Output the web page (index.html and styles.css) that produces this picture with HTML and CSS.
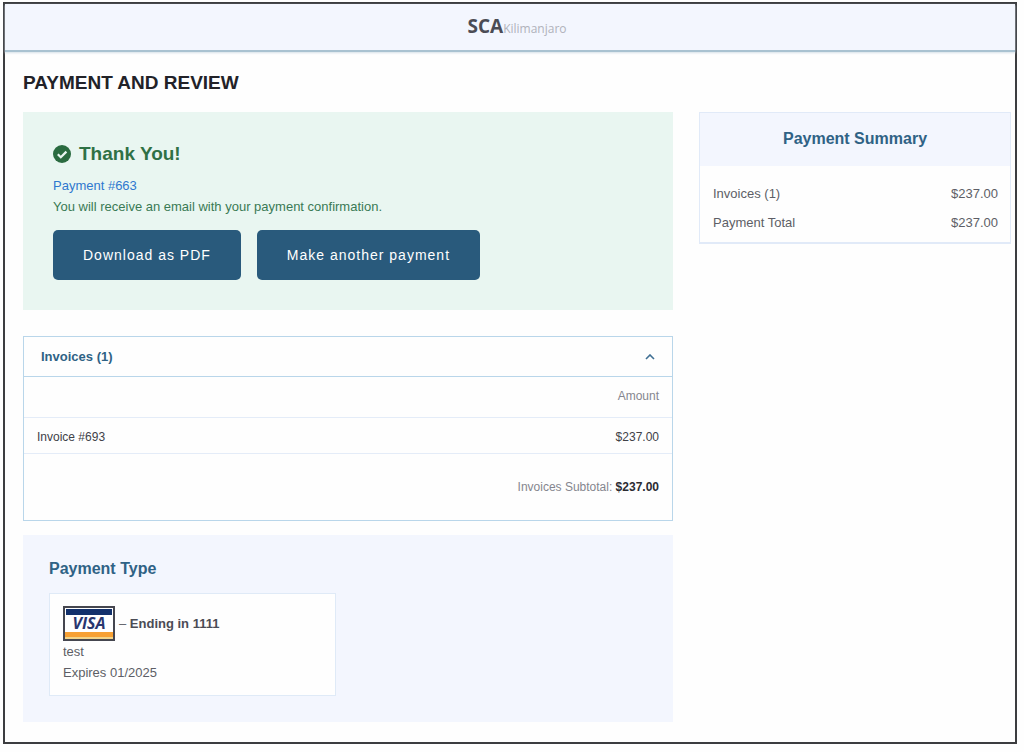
FILE: index.html
```html
<!DOCTYPE html>
<html lang="en">
<head>
  <meta charset="UTF-8" />
  <meta name="viewport" content="width=device-width, initial-scale=1" />
  <title>Payment and Review</title>
  <link rel="stylesheet" href="styles.css">
</head>
<body>
  <div class="page">
    <header class="site-header">
      <a class="logo" href="#"><span class="logo-main">SCA</span><span class="logo-sub">Kilimanjaro</span></a>
    </header>

    <main class="content">
      <h1 class="page-title">PAYMENT AND REVIEW</h1>

      <div class="columns">
        <div class="main-column">
          <section class="confirmation">
            <h2 class="confirmation-title">
              <svg class="check-icon" viewBox="0 0 18 18" aria-hidden="true">
                <circle cx="9" cy="9" r="9" fill="#2a6b40" />
                <path d="M4.8 9.2l3 3 5.6-5.6" fill="none" stroke="#e9f6f1" stroke-width="2.2" />
              </svg>
              Thank You!
            </h2>
            <a class="payment-link" href="#">Payment #663</a>
            <p class="confirmation-text">You will receive an email with your payment confirmation.</p>
            <div class="actions">
              <button class="button" type="button">Download as PDF</button>
              <button class="button" type="button">Make another payment</button>
            </div>
          </section>

          <section class="accordion">
            <h2 class="accordion-head">
              <button class="accordion-toggle" id="toggle" type="button" aria-expanded="true" aria-controls="invoices">
                Invoices (1)
                <svg class="chevron" viewBox="0 0 10 6" aria-hidden="true">
                  <path d="M1 5l4-4 4 4" fill="none" stroke="#3f6f93" stroke-width="1.6" />
                </svg>
              </button>
            </h2>
            <table class="invoices" id="invoices">
              <thead>
                <tr><td></td><th scope="col">Amount</th></tr>
              </thead>
              <tbody>
                <tr><td>Invoice #693</td><td class="amount">$237.00</td></tr>
              </tbody>
              <tfoot>
                <tr><td colspan="2">Invoices Subtotal: <strong>$237.00</strong></td></tr>
              </tfoot>
            </table>
          </section>

          <section class="payment-type">
            <h2 class="section-title">Payment Type</h2>
            <div class="card">
              <div class="card-number">
                <svg class="visa" viewBox="0 0 52 35" role="img" aria-label="Visa">
                  <rect x="1" y="1" width="50" height="33" fill="#fff" stroke="#45464f" stroke-width="2" />
                  <rect x="3" y="3" width="46" height="6" fill="#12306b" />
                  <rect x="2" y="26" width="48" height="5" fill="#f7a033" />
                  <rect x="2" y="31" width="48" height="2" fill="#f3d488" />
                  <text x="26" y="23" class="visa-text">VISA</text>
                </svg>
                <span>– <strong>Ending in 1111</strong></span>
              </div>
              <p>test</p>
              <p>Expires 01/2025</p>
            </div>
          </section>
        </div>

        <aside class="summary">
          <h2 class="summary-title">Payment Summary</h2>
          <dl class="summary-list">
            <div class="summary-row"><dt>Invoices (1)</dt><dd>$237.00</dd></div>
            <div class="summary-row"><dt>Payment Total</dt><dd>$237.00</dd></div>
          </dl>
        </aside>
      </div>
    </main>
  </div>

  <script>
    const toggle = document.getElementById('toggle');
    const invoices = document.getElementById('invoices');

    toggle.addEventListener('click', () => {
      const open = toggle.getAttribute('aria-expanded') === 'true';
      toggle.setAttribute('aria-expanded', String(!open));
      invoices.hidden = open;
    });
  </script>
</body>
</html>
```
FILE: styles.css
```css
* {
  box-sizing: border-box;
}

body {
  margin: 0;
  padding: 2px 7px 7px 3px;
  font-family: "Liberation Sans", Arial, sans-serif;
  font-size: 13px;
  line-height: 21px;
  color: #5d5e66;
  background: #fefefe;
}

h1,
h2,
p,
dl,
dd {
  margin: 0;
}

.page {
  border: 2px solid #3c3d40;
}

/* Header */
.site-header {
  display: flex;
  justify-content: center;
  align-items: center;
  height: 48px;
  padding-left: 14px;
  background: #f3f6fe;
  border-bottom: 2px solid #a9c2d1;
  box-shadow: 0 1px 2px #d5e0e8;
}

.logo {
  font-family: "Open Sans", sans-serif;
  text-decoration: none;
}

.logo-main {
  font-size: 19px;
  font-weight: bold;
  color: #4b4c55;
}

.logo-sub {
  font-size: 12px;
  color: #b0b2bb;
}

.content {
  padding: 19px 4px 20px 18px;
}

.page-title {
  margin-bottom: 17px;
  font-size: 19px;
  line-height: 24px;
  color: #222228;
}

.columns {
  display: grid;
  grid-template-columns: 25fr 12fr;
  gap: 26px;
  align-items: start;
}

/* Confirmation */
.confirmation {
  margin-bottom: 26px;
  padding: 30px;
  background: #e9f6f1;
}

.confirmation-title {
  display: flex;
  align-items: center;
  gap: 8px;
  margin-bottom: 9px;
  font-size: 19px;
  line-height: 24px;
  color: #2f7145;
}

.check-icon {
  width: 18px;
  height: 18px;
}

.payment-link {
  color: #2f78cf;
  text-decoration: none;
}

.confirmation-text {
  color: #3a7a55;
}

.actions {
  display: flex;
  gap: 16px;
  margin-top: 13px;
}

.button {
  height: 50px;
  padding: 0 30px;
  border: 0;
  border-radius: 5px;
  font: 14px "Liberation Sans", Arial, sans-serif;
  letter-spacing: 1px;
  color: #fff;
  background: #295a7c;
  cursor: pointer;
}

/* Invoices */
.accordion {
  margin-bottom: 14px;
  border: 1px solid #b9d6ea;
}

.accordion-toggle {
  display: flex;
  justify-content: space-between;
  align-items: center;
  width: 100%;
  height: 40px;
  padding: 0 17px;
  border: 0;
  border-bottom: 1px solid #b9d6ea;
  font: bold 13px "Liberation Sans", Arial, sans-serif;
  color: #2f6285;
  background: none;
  cursor: pointer;
}

.chevron {
  width: 10px;
  height: 6px;
}

.invoices {
  width: 100%;
  border-collapse: collapse;
  font-size: 12px;
}

.invoices td,
.invoices th {
  padding: 0 13px;
}

.invoices th {
  height: 40px;
  font-weight: normal;
  text-align: right;
  color: #85868e;
}

.invoices tbody td {
  height: 36px;
  padding-top: 4px;
  color: #404148;
}

.invoices thead tr,
.invoices tbody tr {
  border-bottom: 1px solid #e4ecf8;
}

.invoices .amount {
  text-align: right;
}

.invoices tfoot td {
  height: 67px;
  padding-top: 2px;
  text-align: right;
  color: #85868e;
}

.invoices strong {
  color: #2b2b32;
}

/* Payment type */
.payment-type {
  padding: 24px 26px 26px;
  background: #f3f6fe;
}

.section-title {
  margin-bottom: 14px;
  font-size: 16px;
  line-height: 20px;
  color: #2f6285;
}

.card {
  width: 48%;
  padding: 12px 13px;
  border: 1px solid #dfeaf7;
  background: #fefefe;
}

.card-number {
  display: flex;
  align-items: center;
  gap: 4px;
}

.card-number strong {
  color: #4b4c55;
}

.visa {
  width: 52px;
  height: 35px;
}

.visa-text {
  font: italic bold 16px "Open Sans", sans-serif;
  text-anchor: middle;
  fill: #29366f;
}

/* Summary */
.summary {
  border: 1px solid #e1eaf8;
  border-bottom-width: 2px;
}

.summary-title {
  padding: 15px 16px 17px;
  font-size: 16px;
  line-height: 21px;
  text-align: center;
  color: #2f6285;
  background: #f3f6fe;
}

.summary-list {
  padding: 13px 12px 5px 13px;
}

.summary-row {
  display: flex;
  justify-content: space-between;
  line-height: 29px;
}
```
